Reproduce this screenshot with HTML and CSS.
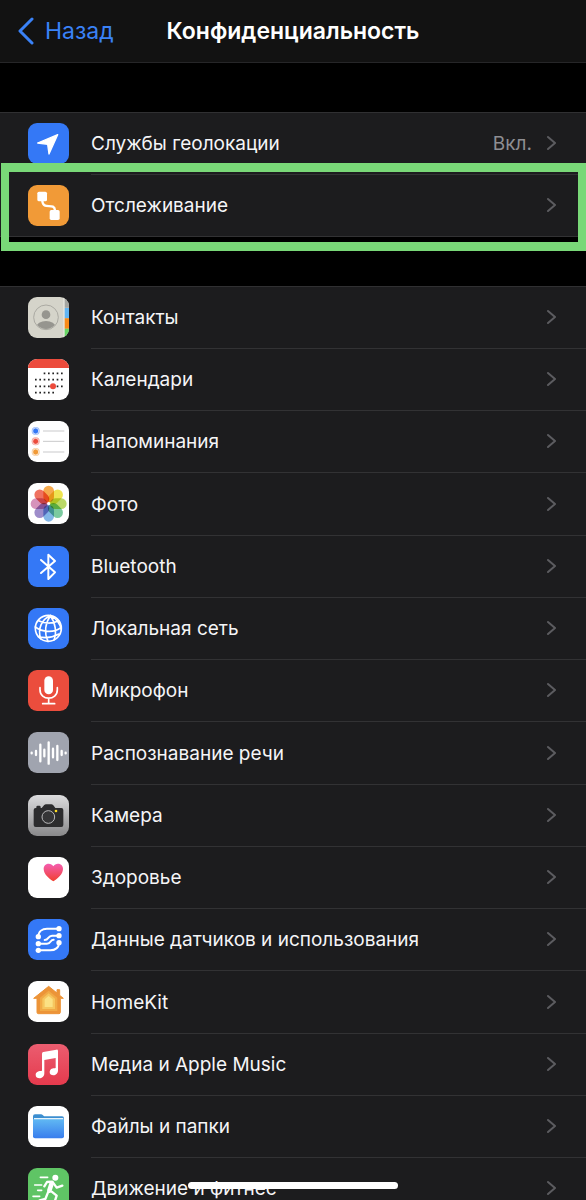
FILE: index.html
```html
<!DOCTYPE html>
<html lang="ru">
<head>
<meta charset="utf-8">
<meta name="viewport" content="width=device-width, initial-scale=1">
<title>Конфиденциальность</title>
<link rel="stylesheet" href="styles.css">
</head>
<body>
<div class="screen">
  <header class="navbar">
    <a class="back" href="#"><svg class="back-arrow" viewBox="0 0 16 28"><path d="M14 2 2 14l12 12"/></svg>Назад</a>
    <h1 class="title">Конфиденциальность</h1>
  </header>
  <main class="content">
    <ul class="group">
      <li><a class="row" href="#">
        <svg class="icon blue" viewBox="0 0 123 123"><path class="fill round" d="M89 35 29 60l30 4 4 29z"/></svg>
        <span class="label">Службы геолокации</span><span class="value">Вкл.</span><svg class="chevron" viewBox="0 0 10 16"><path d="m1 2 7 6-7 6"/></svg></a></li>
      <li class="marked"><a class="row" href="#">
        <svg class="icon orange" viewBox="0 0 123 123"><rect class="fill" x="28" y="20" width="29" height="29" rx="5"/><rect class="fill" x="65" y="75" width="30" height="30" rx="5"/><path class="line w7" d="M43 48c2 29 36 2 38 28"/></svg>
        <span class="label">Отслеживание</span><svg class="chevron" viewBox="0 0 10 16"><path d="m1 2 7 6-7 6"/></svg></a></li>
    </ul>
    <ul class="group">
      <li><a class="row" href="#">
        <svg class="icon contacts" viewBox="0 0 123 123"><path fill="#a5a5a0" d="M109 0h14v32h-14z"/><path fill="#62b5f3" d="M109 33h14v31h-14z"/><path fill="#f98a18" d="M109 64h14v31h-14z"/><path fill="#67d765" d="M109 95h14v28h-14z"/><path stroke="#eeeee8" stroke-width="3" d="M108 0v123"/><clipPath id="face"><circle cx="54" cy="61" r="35"/></clipPath><circle cx="54" cy="61" r="37" fill="none" stroke="#aaa9a2" stroke-width="3"/><circle cx="54" cy="53" r="13" fill="#96958f"/><ellipse cx="54" cy="91" rx="29" ry="19" fill="#96958f" clip-path="url(#face)"/></svg>
        <span class="label">Контакты</span><svg class="chevron" viewBox="0 0 10 16"><path d="m1 2 7 6-7 6"/></svg></a></li>
      <li><a class="row" href="#">
        <svg class="icon white" viewBox="0 0 123 123"><path fill="#ec4b3c" d="M0 0h123v27H0z"/><g fill="none" stroke="#222" stroke-width="5" stroke-dasharray="5 8"><path d="M47 43h57M21 62h83M21 82h83M21 101h57"/></g><circle cx="75" cy="82" r="9" fill="#ec4b3c"/></svg>
        <span class="label">Календари</span><svg class="chevron" viewBox="0 0 10 16"><path d="m1 2 7 6-7 6"/></svg></a></li>
      <li><a class="row" href="#">
        <svg class="icon white" viewBox="0 0 123 123"><path stroke="#c9c9cb" stroke-width="3" d="M45 30h64M45 61h64M45 93h64"/><g fill="#3478f6"><circle cx="23" cy="30" r="12" opacity=".5"/><circle cx="23" cy="30" r="9" stroke="#fff" stroke-width="2"/></g><g fill="#ec4b3c"><circle cx="23" cy="61" r="12" opacity=".5"/><circle cx="23" cy="61" r="9" stroke="#fff" stroke-width="2"/></g><g fill="#f19a37"><circle cx="23" cy="93" r="12" opacity=".5"/><circle cx="23" cy="93" r="9" stroke="#fff" stroke-width="2"/></g></svg>
        <span class="label">Напоминания</span><svg class="chevron" viewBox="0 0 10 16"><path d="m1 2 7 6-7 6"/></svg></a></li>
      <li><a class="row" href="#">
        <svg class="icon white petals" viewBox="0 0 123 123"><rect x="46" y="8" width="32" height="50" rx="16" fill="#f5a13a"/><rect x="46" y="8" width="32" height="50" rx="16" fill="#eee33f" transform="rotate(45 62 62)"/><rect x="46" y="8" width="32" height="50" rx="16" fill="#b4d556" transform="rotate(90 62 62)"/><rect x="46" y="8" width="32" height="50" rx="16" fill="#6dc495" transform="rotate(135 62 62)"/><rect x="46" y="8" width="32" height="50" rx="16" fill="#75aee5" transform="rotate(180 62 62)"/><rect x="46" y="8" width="32" height="50" rx="16" fill="#9381c4" transform="rotate(225 62 62)"/><rect x="46" y="8" width="32" height="50" rx="16" fill="#d287b4" transform="rotate(270 62 62)"/><rect x="46" y="8" width="32" height="50" rx="16" fill="#ee624f" transform="rotate(315 62 62)"/><circle cx="62" cy="62" r="4" fill="#fff"/></svg>
        <span class="label">Фото</span><svg class="chevron" viewBox="0 0 10 16"><path d="m1 2 7 6-7 6"/></svg></a></li>
      <li><a class="row" href="#">
        <svg class="icon blue" viewBox="0 0 123 123"><path class="line w6" d="m39 42 42 37-20 20V26l20 19-42 36"/></svg>
        <span class="label">Bluetooth</span><svg class="chevron" viewBox="0 0 10 16"><path d="m1 2 7 6-7 6"/></svg></a></li>
      <li><a class="row" href="#">
        <svg class="icon blue" viewBox="0 0 123 123"><g class="line w5"><circle cx="61" cy="61" r="39"/><path d="M67 23C42 33 28 62 38 92M67 23C52 45 48 74 60 100M67 23C82 43 87 75 78 96M67 23c18 7 30 26 33 42M32 38c16 9 42 10 60 0M22 57c20 15 54 19 77 2M31 86c20 5 44 2 62-8"/></g></svg>
        <span class="label">Локальная сеть</span><svg class="chevron" viewBox="0 0 10 16"><path d="m1 2 7 6-7 6"/></svg></a></li>
      <li><a class="row" href="#">
        <svg class="icon red" viewBox="0 0 123 123"><rect class="fill" x="49" y="19" width="26" height="54" rx="13"/><path class="line w5" d="M36 53v6c0 34 52 34 52 0v-6M62 85v16M44 101h36"/></svg>
        <span class="label">Микрофон</span><svg class="chevron" viewBox="0 0 10 16"><path d="m1 2 7 6-7 6"/></svg></a></li>
      <li><a class="row" href="#">
        <svg class="icon gray" viewBox="0 0 123 123"><path class="line w7" d="M11 62v2M24 57v12M37 38v50M49 53v20M62 31v64M75 50v26M88 42v42M101 57v12M113 62v2"/></svg>
        <span class="label">Распознавание речи</span><svg class="chevron" viewBox="0 0 10 16"><path d="m1 2 7 6-7 6"/></svg></a></li>
      <li><a class="row" href="#">
        <svg class="icon camera" viewBox="0 0 123 123"><path fill="#2c2c2e" d="M25 36q0-4 4-4h5q4 0 4 4v3h3l7-8q3-3 6-3h16q3 0 6 3l6 8h18q6 0 6 6v45q0 6-6 6H23q-6 0-6-6V45q0-6 6-6h2z"/><circle cx="61" cy="66" r="19" fill="#353537" stroke="#b9b9bb" stroke-width="3"/><circle cx="84" cy="48" r="4" fill="#fddb22"/></svg>
        <span class="label">Камера</span><svg class="chevron" viewBox="0 0 10 16"><path d="m1 2 7 6-7 6"/></svg></a></li>
      <li><a class="row" href="#">
        <svg class="icon white" viewBox="0 0 123 123"><linearGradient id="heart" x2="0" y2="1"><stop stop-color="#f45db1"/><stop offset="1" stop-color="#f1402f"/></linearGradient><path fill="url(#heart)" d="M76 73C63 65 47 51 47 36c0-18 22-21 29-8 7-13 29-10 29 8 0 15-16 29-29 37z"/></svg>
        <span class="label">Здоровье</span><svg class="chevron" viewBox="0 0 10 16"><path d="m1 2 7 6-7 6"/></svg></a></li>
      <li><a class="row" href="#">
        <svg class="icon blue" viewBox="0 0 123 123"><path class="line w6" d="M31 53c0-16 12-24 26-24h36M93 50H72c-13 0-9 13-22 13M31 74h26c13 0 9-12 20-12M31 94h36c14 0 26-8 26-23"/><g class="fill"><circle cx="31" cy="53" r="8"/><circle cx="31" cy="74" r="8"/><circle cx="31" cy="94" r="8"/><circle cx="93" cy="29" r="8"/><circle cx="93" cy="50" r="8"/><circle cx="93" cy="71" r="8"/></g></svg>
        <span class="label">Данные датчиков и использования</span><svg class="chevron" viewBox="0 0 10 16"><path d="m1 2 7 6-7 6"/></svg></a></li>
      <li><a class="row" href="#">
        <svg class="icon white" viewBox="0 0 123 123"><g stroke-linejoin="round"><path fill="#ec9438" stroke="#ec9438" stroke-width="3" d="M62 16 17 52h10v42q0 4 4 4h62q4 0 4-4V52h9L95 43V26h-8v10z"/><path fill="#f1aa46" d="M62 29 36 50v40h52V50z"/><path fill="#f6c65f" d="M62 37 43 53v31h38V53z"/><path fill="#fbe184" d="M62 45 50 55v23h24V55z"/></g></svg>
        <span class="label">HomeKit</span><svg class="chevron" viewBox="0 0 10 16"><path d="m1 2 7 6-7 6"/></svg></a></li>
      <li><a class="row" href="#">
        <svg class="icon music" viewBox="0 0 123 123"><path class="fill" d="M42 29q0-4 4-5l39-7q5-1 5 4v58c0 20-26 18-25 5 1-10 9-11 18-12V42l-34 6v40c0 19-26 19-26 5 0-11 10-12 19-13z"/></svg>
        <span class="label">Медиа и Apple Music</span><svg class="chevron" viewBox="0 0 10 16"><path d="m1 2 7 6-7 6"/></svg></a></li>
      <li><a class="row" href="#">
        <svg class="icon white" viewBox="0 0 123 123"><linearGradient id="folder" x2="0" y2="1"><stop stop-color="#60b8f3"/><stop offset="1" stop-color="#397ded"/></linearGradient><path fill="#3c8ed0" d="M15 31q0-6 6-6h18q3 0 6 3l3 3h54q6 0 6 6v20H15z"/><path fill="#e4f2fb" d="M18 36h88v6H18z"/><path fill="url(#folder)" d="M15 40h93v51q0 6-6 6H21q-6 0-6-6z"/></svg>
        <span class="label">Файлы и папки</span><svg class="chevron" viewBox="0 0 10 16"><path d="m1 2 7 6-7 6"/></svg></a></li>
      <li><a class="row" href="#">
        <svg class="icon green" viewBox="0 0 123 123"><circle class="fill" cx="82" cy="29" r="9"/><path class="line w5" d="M37 28h22M20 51h21M29 67h12M15 85h20"/><path class="line w7" d="m49 55 8-13 16-1 13 18 17-6M60 73l-8 20-17 4M71 71l15 12-7 21"/><path class="line w14" d="m71 46-7 22"/></svg>
        <span class="label">Движение и фитнес</span><svg class="chevron" viewBox="0 0 10 16"><path d="m1 2 7 6-7 6"/></svg></a></li>
    </ul>
  </main>
  <div class="home-indicator"></div>
</div>
</body>
</html>
```
FILE: styles.css
```css
* { box-sizing: border-box; }

body {
  margin: 0;
  background: #000;
  color: #f5f5f7;
  font-family: Inter, "Noto Sans", sans-serif;
  font-size: 19px;
  line-height: 24px;
}

a { color: inherit; text-decoration: none; }

.screen {
  height: 100vh;
  overflow: hidden;
}

.navbar {
  display: grid;
  grid-template-columns: 1fr auto 1fr;
  align-items: center;
  height: 63px;
  padding: 0 18px;
  background: #121212;
  border-bottom: 1px solid #262628;
  font-size: 23px;
}

.back {
  display: flex;
  align-items: center;
  gap: 11px;
  color: #3a82f7;
}

.back-arrow {
  width: 16px;
  height: 28px;
  fill: none;
  stroke: currentColor;
  stroke-width: 3;
  stroke-linecap: round;
  stroke-linejoin: round;
}

.title {
  margin: 0;
  color: #fff;
  font-size: 23px;
  font-weight: 600;
}

.content {
  display: grid;
  gap: 49px;
  padding-top: 49px;
}

.group {
  margin: 0;
  padding: 0;
  list-style: none;
  background: #1c1c1e;
  border-top: 1px solid #303032;
}

.group li {
  position: relative;
  height: 62px;
}

.group li:nth-child(4n) { height: 63px; }

.row {
  display: flex;
  align-items: center;
  height: 100%;
  padding: 0 29px 2px 28px;
}

.group li::after {
  content: "";
  position: absolute;
  right: 0;
  bottom: 0;
  left: 91px;
  border-bottom: 1px solid #323234;
}

.group li:last-child::after { left: 0; }

.marked::before {
  content: "";
  position: absolute;
  z-index: 1;
  inset: -12px 0 -14px 1px;
  border: 9px solid #79d878;
  border-right-width: 8px;
  border-left-width: 8px;
  pointer-events: none;
}

.label {
  flex: 1;
  margin-left: 22px;
  padding-top: 2px;
}

.value {
  margin-right: 15px;
  padding-top: 2px;
  color: #8e8e93;
}

.chevron {
  width: 10px;
  height: 16px;
  fill: none;
  stroke: #5c5c60;
  stroke-width: 2;
  stroke-linecap: round;
  stroke-linejoin: round;
}

.icon {
  width: 41px;
  height: 41px;
  border-radius: 9px;
}

.blue { background: #3478f6; }
.orange { background: #f19a37; }
.red { background: #eb4d3d; }
.gray { background: #a0a4af; }
.green { background: #5fc465; }
.white { background: #fff; }
.contacts { background: #d5d4ca; }
.camera { background: linear-gradient(#dcdcde, #89898b); }
.music { background: linear-gradient(#eb5d70, #e53a4d); }

.fill { fill: #fff; }
.round { stroke: #fff; stroke-width: 4; stroke-linejoin: round; }

.line {
  fill: none;
  stroke: #fff;
  stroke-linecap: round;
  stroke-linejoin: round;
}

.w5 { stroke-width: 5; }
.w6 { stroke-width: 6; }
.w7 { stroke-width: 7; }
.w14 { stroke-width: 14; }

.petals { isolation: isolate; }
.petals rect { mix-blend-mode: multiply; opacity: 0.9; }

.home-indicator {
  position: fixed;
  bottom: 11px;
  left: 50%;
  width: 210px;
  height: 7px;
  border-radius: 4px;
  background: #fff;
  transform: translateX(-50%);
}
```
